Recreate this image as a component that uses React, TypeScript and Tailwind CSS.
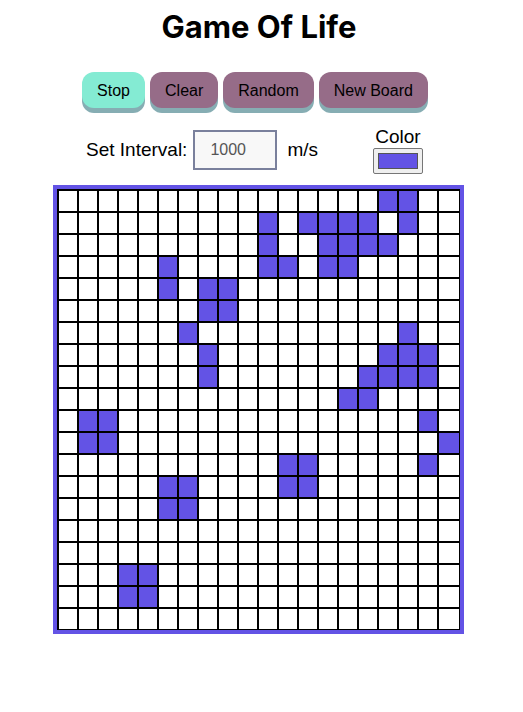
const ROWS = 20;
const COLS = 20;

// live cells as [row, col]
const alive: [number, number][] = [
  [0, 16], [0, 17],
  [1, 10], [1, 12], [1, 13], [1, 14], [1, 15], [1, 17],
  [2, 10], [2, 13], [2, 14], [2, 15], [2, 16],
  [3, 5], [3, 10], [3, 11], [3, 13], [3, 14],
  [4, 5], [4, 7], [4, 8],
  [5, 7], [5, 8],
  [6, 6], [6, 17],
  [7, 7], [7, 16], [7, 17], [7, 18],
  [8, 7], [8, 15], [8, 16], [8, 17], [8, 18],
  [9, 14], [9, 15],
  [10, 1], [10, 2], [10, 18],
  [11, 1], [11, 2], [11, 19],
  [12, 11], [12, 12], [12, 18],
  [13, 5], [13, 6], [13, 11], [13, 12],
  [14, 5], [14, 6],
  [17, 3], [17, 4],
  [18, 3], [18, 4],
];

const liveSet = new Set(alive.map(([r, c]) => `${r}-${c}`));

const Button = ({ label, active }: { label: string; active?: boolean }) => (
  <button
    className={
      "rounded-[12px] px-[15px] pb-[8px] pt-[10px] text-[16px] leading-[18px] text-black shadow-[0_5px_0_#86adb3] " +
      (active ? "bg-[#84ebd3]" : "bg-[#966c88]")
    }
  >
    {label}
  </button>
);

export default function App() {
  return (
    <div className="flex min-h-screen flex-col items-center bg-white font-['Liberation_Sans',Arial,sans-serif] text-black">
      <h1 className="mr-[5px] mt-[7px] font-['Inter',sans-serif] text-[31px] font-bold leading-[40px]">
        Game Of Life
      </h1>

      <div className="mr-[13px] mt-[25px] flex gap-[5px]">
        <Button label="Stop" active />
        <Button label="Clear" />
        <Button label="Random" />
        <Button label="New Board" />
      </div>

      <div className="mr-[14px] mt-[18px] flex items-center">
        <span className="text-[19px]">Set Interval:</span>
        <input
          defaultValue="1000"
          className="ml-[6px] h-[40px] w-[84px] border-2 border-[#7a809c] bg-[#f8f8f8] pl-[15px] text-[16px] text-[#555] outline-none"
        />
        <span className="ml-[10px] text-[19px]">m/s</span>
        <div className="ml-[55px] flex flex-col items-center">
          <span className="text-[19px] leading-[22px]">Color</span>
          <div className="flex h-[26px] w-[50px] items-center justify-center rounded-[2px] border border-[#767676] bg-[#efefef]">
            <div className="h-[16px] w-[40px] border border-[#555] bg-[#6353e5]" />
          </div>
        </div>
      </div>

      <div className="mr-[6px] mt-[11px] border-4 border-[#6353e5]">
        <div className="grid grid-cols-[repeat(19,20px)_22px] border-l border-t border-black bg-white">
          {Array.from({ length: ROWS * COLS }, (_, i) => {
            const r = Math.floor(i / COLS);
            const c = i % COLS;
            const on = liveSet.has(`${r}-${c}`);
            return (
              <div
                key={i}
                className={"h-[22px] border border-black " + (on ? "bg-[#6353e5]" : "bg-white")}
              />
            );
          })}
        </div>
      </div>
    </div>
  );
}
